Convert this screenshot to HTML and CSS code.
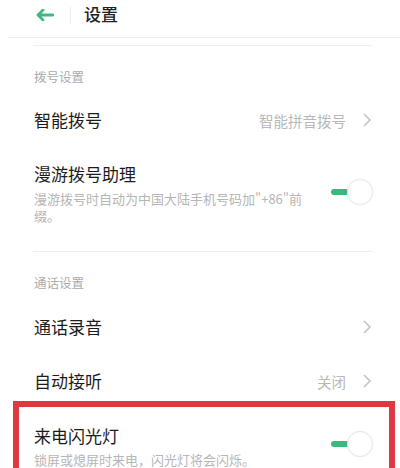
FILE: index.html
```html
<!DOCTYPE html>
<html lang="zh">
<head>
<meta charset="utf-8">
<link rel="stylesheet" href="styles.css">
</head>
<body>
<div class="page">
  <header class="topbar">
    <svg class="back" width="18" height="12" viewBox="0 0 18 12">
      <path d="M7 1 L2 6 L7 11 M2 6 H17" fill="none" stroke="#3dba82" stroke-width="2.8" stroke-linecap="round" stroke-linejoin="round"/>
    </svg>
    <span class="vsep"></span>
    <h1 class="title">设置</h1>
  </header>
  <div class="rule rule-full"></div>
  <div class="rule rule-inset rule-top"></div>

  <div class="label label-first">拨号设置</div>
  <div class="row row-nav row-a">
    <span class="row-title">智能拨号</span>
    <span class="row-value">智能拼音拨号</span>
    <svg class="chev" width="10" height="16" viewBox="0 0 10 16"><path d="M2 2 L8 8 L2 14" fill="none" stroke="#c4c4c4" stroke-width="1.6"/></svg>
  </div>
  <div class="row row-toggle row-b">
    <div class="row-text">
      <div class="row-title">漫游拨号助理</div>
      <div class="row-sub">漫游拨号时自动为中国大陆手机号码加"+86"前缀。</div>
    </div>
    <span class="switch"><span class="track"></span><span class="knob"></span></span>
  </div>
  <div class="rule rule-inset"></div>

  <div class="label label-second">通话设置</div>
  <div class="row row-nav row-c">
    <span class="row-title">通话录音</span>
    <svg class="chev" width="10" height="16" viewBox="0 0 10 16"><path d="M2 2 L8 8 L2 14" fill="none" stroke="#c4c4c4" stroke-width="1.6"/></svg>
  </div>
  <div class="row row-nav row-d">
    <span class="row-title">自动接听</span>
    <span class="row-value">关闭</span>
    <svg class="chev" width="10" height="16" viewBox="0 0 10 16"><path d="M2 2 L8 8 L2 14" fill="none" stroke="#c4c4c4" stroke-width="1.6"/></svg>
  </div>
  <div class="highlight">
    <div class="row row-toggle row-e">
      <div class="row-text">
        <div class="row-title">来电闪光灯</div>
        <div class="row-sub">锁屏或熄屏时来电，闪光灯将会闪烁。</div>
      </div>
      <span class="switch"><span class="track"></span><span class="knob"></span></span>
    </div>
  </div>
</div>
</body>
</html>
```

FILE: styles.css
```css
* { box-sizing: border-box; margin: 0; padding: 0; }
html, body { background: #fff; }
body {
  width: 400px;
  height: 468px;
  overflow: hidden;
  font-family: "Noto Sans CJK SC", "Noto Sans", sans-serif;
  color: #1c1c1c;
}
.page { width: 400px; }

.topbar {
  height: 30px;
  display: flex;
  align-items: center;
  padding-left: 36px;
}
.back { display: block; margin-top: -1px; }
.vsep {
  width: 1px;
  height: 17px;
  background: #ececec;
  margin-left: 16px;
  margin-right: 13px;
}
.title {
  font-size: 17px;
  font-weight: 500;
  line-height: 22px;
  color: #222;
  margin-top: -2px;
}

.rule { height: 1px; background: #eeeeee; }
.rule-full { margin: 7px 0 0 8px; }
.rule-inset { margin: 0 28px 0 33px; }
.rule-top { margin-top: 7px; }

.label {
  font-size: 12.5px;
  line-height: 20px;
  color: #ababab;
  padding-left: 34px;
}
.label-first { margin-top: 21px; }
.label-second { margin-top: 21px; }

.row {
  display: flex;
  align-items: center;
  padding: 0 28px 0 34px;
}
.row-title {
  font-size: 17px;
  line-height: 22px;
  color: #1c1c1c;
}
.row-nav .row-title { flex: 1; }
.row-value {
  font-size: 14.5px;
  color: #b8b8b8;
  margin-right: 16px;
}
.chev { display: block; }

.row-a { height: 66px; }
.row-c { height: 68px; }
.row-d { height: 40px; }

.row-toggle { align-items: flex-start; }
.row-text { flex: 1; }
.row-sub {
  font-size: 13px;
  line-height: 17px;
  color: #b6b6b6;
  max-width: 268px;
  margin-top: 5px;
}
.row-b { padding-top: 10px; padding-bottom: 27px; }

.switch {
  position: relative;
  width: 43px;
  height: 26px;
  flex: none;
  margin-right: -1px;
}
.track {
  position: absolute;
  left: 1px;
  top: 10px;
  width: 18px;
  height: 6px;
  border-radius: 3px;
  background: #3ab97f;
}
.knob {
  position: absolute;
  right: 0;
  top: 0;
  width: 26px;
  height: 26px;
  border-radius: 50%;
  background: #fff;
  border: 1px solid #e6e6e6;
  box-shadow: 0 0 3px rgba(0,0,0,0.04);
}
.row-b .switch { margin-top: 16px; }

.highlight {
  margin: 0 5px 0 13px;
  height: 80px;
  border: 6px solid #dc3a40;
  border-bottom: none;
}
.row-e { padding: 18px 17px 0 15px; }
.row-e .row-sub { margin-top: 4px; max-width: none; }
.row-e .switch { margin-top: 6px; }
```
